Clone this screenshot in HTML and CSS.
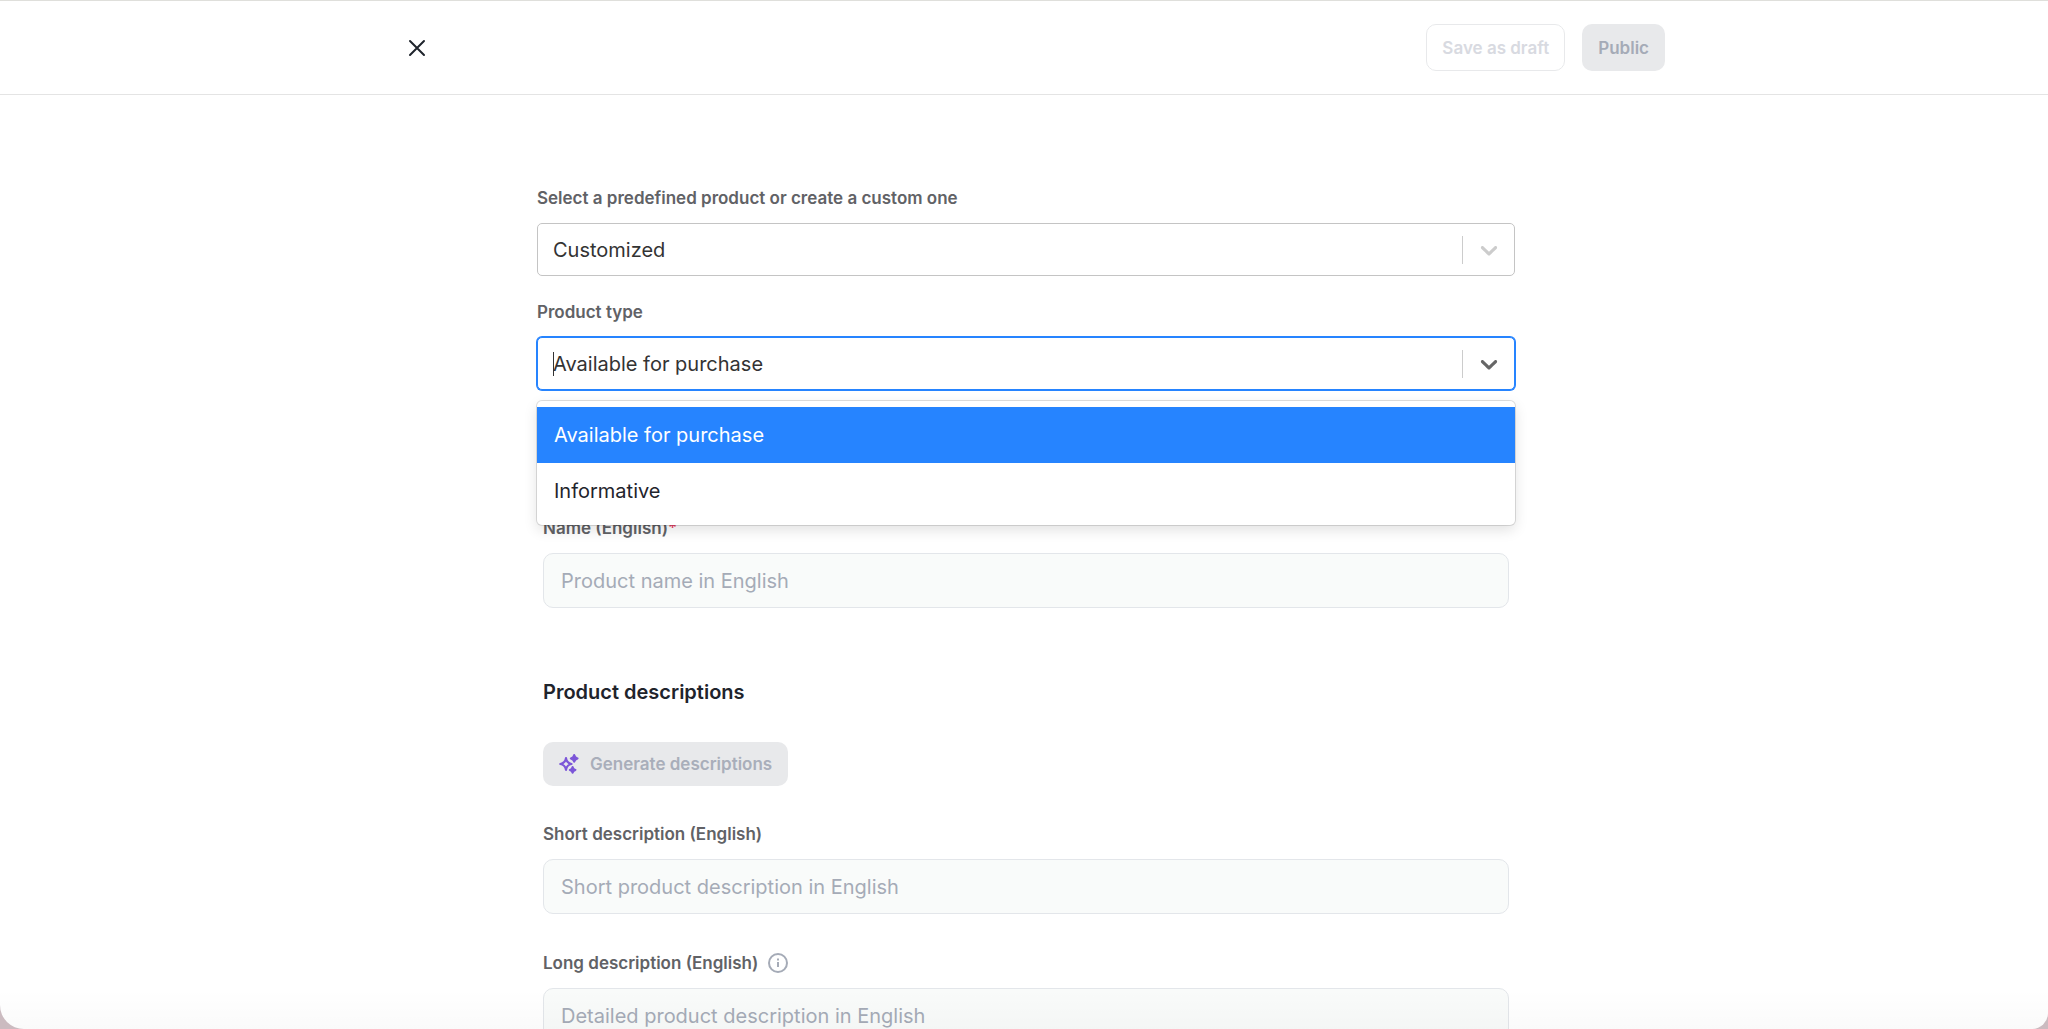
FILE: index.html
```html
<!DOCTYPE html>
<html lang="en">
<head>
<meta charset="utf-8">
<meta name="viewport" content="width=device-width, initial-scale=1">
<title>New product</title>
<link rel="stylesheet" href="styles.css">
</head>
<body>
<div class="shell">
  <header class="topbar">
    <div class="topbar-inner">
      <button class="close" type="button" aria-label="Close">
        <svg viewBox="0 0 18 18" width="18" height="18" fill="none" stroke="currentColor" stroke-width="2" stroke-linecap="round"><path d="M2 2l14 14M16 2L2 16"/></svg>
      </button>
      <div class="actions">
        <button class="btn btn-outline" type="button" disabled>Save as draft</button>
        <button class="btn btn-solid" type="submit" form="product" disabled>Public</button>
      </div>
    </div>
  </header>
  <main class="content">
    <form class="form" id="product">
      <div class="field">
        <label class="label" for="preset">Select a predefined product or create a custom one</label>
        <div class="select">
          <select class="select-control" id="preset"><option>Customized</option></select>
          <span class="indicator"><svg viewBox="0 0 20 20" width="28" height="28" fill="currentColor"><path d="M4.516 7.548c0.436-0.446 1.043-0.481 1.576 0l3.908 3.747 3.908-3.747c0.533-0.481 1.141-0.446 1.574 0 0.436 0.445 0.408 1.197 0 1.615-0.406 0.418-4.695 4.502-4.695 4.502-0.217 0.223-0.502 0.335-0.787 0.335s-0.57-0.112-0.789-0.335c0 0-4.287-4.084-4.695-4.502s-0.436-1.17 0-1.615z"/></svg></span>
        </div>
      </div>
      <div class="field">
        <label class="label" for="type">Product type</label>
        <div class="select select-open">
          <select class="select-control" id="type"><option>Available for purchase</option><option>Informative</option></select>
          <span class="caret"></span>
          <span class="indicator"><svg viewBox="0 0 20 20" width="28" height="28" fill="currentColor"><path d="M4.516 7.548c0.436-0.446 1.043-0.481 1.576 0l3.908 3.747 3.908-3.747c0.533-0.481 1.141-0.446 1.574 0 0.436 0.445 0.408 1.197 0 1.615-0.406 0.418-4.695 4.502-4.695 4.502-0.217 0.223-0.502 0.335-0.787 0.335s-0.57-0.112-0.789-0.335c0 0-4.287-4.084-4.695-4.502s-0.436-1.17 0-1.615z"/></svg></span>
          <ul class="menu" role="listbox" aria-label="Product type">
            <li class="option option-active" role="option" aria-selected="true">Available for purchase</li>
            <li class="option" role="option" aria-selected="false">Informative</li>
          </ul>
        </div>
      </div>
      <div class="details">
        <div class="field">
          <label class="label" for="name">Name (English)<span class="required">*</span></label>
          <input class="input" id="name" type="text" placeholder="Product name in English">
        </div>
        <h2 class="heading">Product descriptions</h2>
        <button class="btn btn-generate" type="button" disabled>
          <svg class="sparkles" viewBox="0 0 20 20" width="20" height="20"><path d="M7 4.200Q7.800 9.200 12.500 10Q7.800 10.800 7 15.800Q6.200 10.800 1.300 10Q6.200 9.200 7 4.200Z" fill="none" stroke="currentColor" stroke-width="2.200" stroke-linejoin="round"/><path d="M15.200 1Q15.800 3.800 18.600 4.400Q15.800 5 15.200 7.800Q14.600 5 11.800 4.400Q14.600 3.800 15.200 1ZM13.600 13Q14.100 15.400 16.500 15.900Q14.100 16.400 13.600 18.800Q13.100 16.400 10.800 15.900Q13.100 15.400 13.600 13Z" fill="currentColor" stroke="currentColor" stroke-width="2" stroke-linejoin="round"/></svg>
          Generate descriptions
        </button>
        <div class="field field-spaced">
          <label class="label" for="short">Short description (English)</label>
          <input class="input" id="short" type="text" placeholder="Short product description in English">
        </div>
        <div class="field">
          <label class="label" for="long">Long description (English)
            <svg class="info" viewBox="0 0 20 20" width="20" height="20" fill="none" stroke="currentColor" stroke-width="2"><circle cx="10" cy="10" r="9"/><path d="M10 9v5M10 5.600v2"/></svg>
          </label>
          <textarea class="input textarea" id="long" placeholder="Detailed product description in English"></textarea>
        </div>
      </div>
    </form>
  </main>
</div>
</body>
</html>
```
FILE: styles.css
```css
* { box-sizing: border-box; }

body {
  margin: 0;
  background: #cbbbc0;
  color: #1f242c;
  font-family: Inter, "Liberation Sans", sans-serif;
  font-size: 20px;
  line-height: 28px;
}

button, input, select, textarea { font: inherit; }

.shell {
  position: relative;
  height: 100vh;
  overflow: hidden;
  background: #fff;
  border-top: 1px solid #dfdfdb;
  border-radius: 0 0 16px 24px;
}

.shell::after {
  content: "";
  position: absolute;
  inset: auto 0 0;
  height: 40px;
  background: linear-gradient(transparent, rgba(0, 0, 0, 0.02));
  pointer-events: none;
}

.topbar { border-bottom: 1px solid #e4e4e4; }

.topbar-inner {
  display: flex;
  align-items: center;
  justify-content: space-between;
  max-width: 1282px;
  margin: 0 auto;
  padding: 23px 0 23px 25px;
}

.close {
  display: flex;
  padding: 0;
  border: 0;
  background: none;
  color: #1f242c;
}

.actions { display: flex; gap: 17px; }

.btn {
  padding: 0 15px;
  height: 47px;
  border: 1px solid transparent;
  border-radius: 10px;
  font-size: 17px;
  font-weight: 600;
  line-height: 24px;
}

.btn-outline { background: #fff; border-color: #e8e9eb; color: #d8dae1; }

.btn-solid { background: #e8e9eb; color: #a5abb7; }

.btn-generate {
  display: flex;
  align-items: center;
  gap: 11px;
  height: 44px;
  margin-bottom: 35px;
  background: #e8e9eb;
  color: #a9aeba;
}

.sparkles { color: #7c56d8; }

.content { padding: 90px 24px 0 28px; }

.form { max-width: 978px; margin: 0 auto; }

.field { margin-bottom: 23px; }

.field-spaced { margin-bottom: 36px; }

.label {
  display: flex;
  align-items: center;
  margin-bottom: 12px;
  color: #616266;
  font-size: 17px;
  font-weight: 600;
  line-height: 26px;
}

.select {
  position: relative;
  display: grid;
  grid-template-columns: 1fr 53px;
  align-items: center;
}

.select-control {
  grid-area: 1 / 1 / 2 / 3;
  height: 53px;
  padding: 0 15px;
  appearance: none;
  border: 1px solid #c4c4c4;
  border-radius: 5px;
  background: #fff;
  color: #333;
}

.select-open .select-control {
  border-color: #2684ff;
  box-shadow: 0 0 0 1px #2684ff;
}

.indicator {
  grid-area: 1 / 2;
  display: flex;
  justify-content: center;
  height: 28px;
  align-items: center;
  border-left: 1px solid #ccc;
  color: #ccc;
  pointer-events: none;
}

.select-open .indicator { color: #666; }

.caret {
  grid-area: 1 / 1;
  width: 1px;
  height: 24px;
  margin-left: 16px;
  background: #333;
}

.menu {
  position: absolute;
  top: 100%;
  left: 0;
  right: 0;
  z-index: 1;
  margin: 11px 0 0;
  padding: 6px 0;
  list-style: none;
  background: #fff;
  border-radius: 5px;
  box-shadow: 0 0 0 1px rgba(0, 0, 0, 0.12), 0 5px 14px rgba(0, 0, 0, 0.12);
}

.option { padding: 14px 17px; }

.option-active { background: #2684ff; color: #fff; }

.details { padding: 102px 6px 0; }

.required { color: #f0476a; }

.input {
  display: block;
  width: 100%;
  height: 55px;
  padding: 13px 17px;
  border: 1px solid #e3e6ea;
  border-radius: 10px;
  background: #f9fbfa;
  color: #1f242c;
}

.input::placeholder { color: #a5abb7; opacity: 1; }

.textarea { height: 140px; resize: none; }

.heading {
  margin: 70px 0 36px;
  font-size: 20px;
  font-weight: 600;
  line-height: 28px;
}

.info { margin-left: 10px; color: #a5abb7; }
```
